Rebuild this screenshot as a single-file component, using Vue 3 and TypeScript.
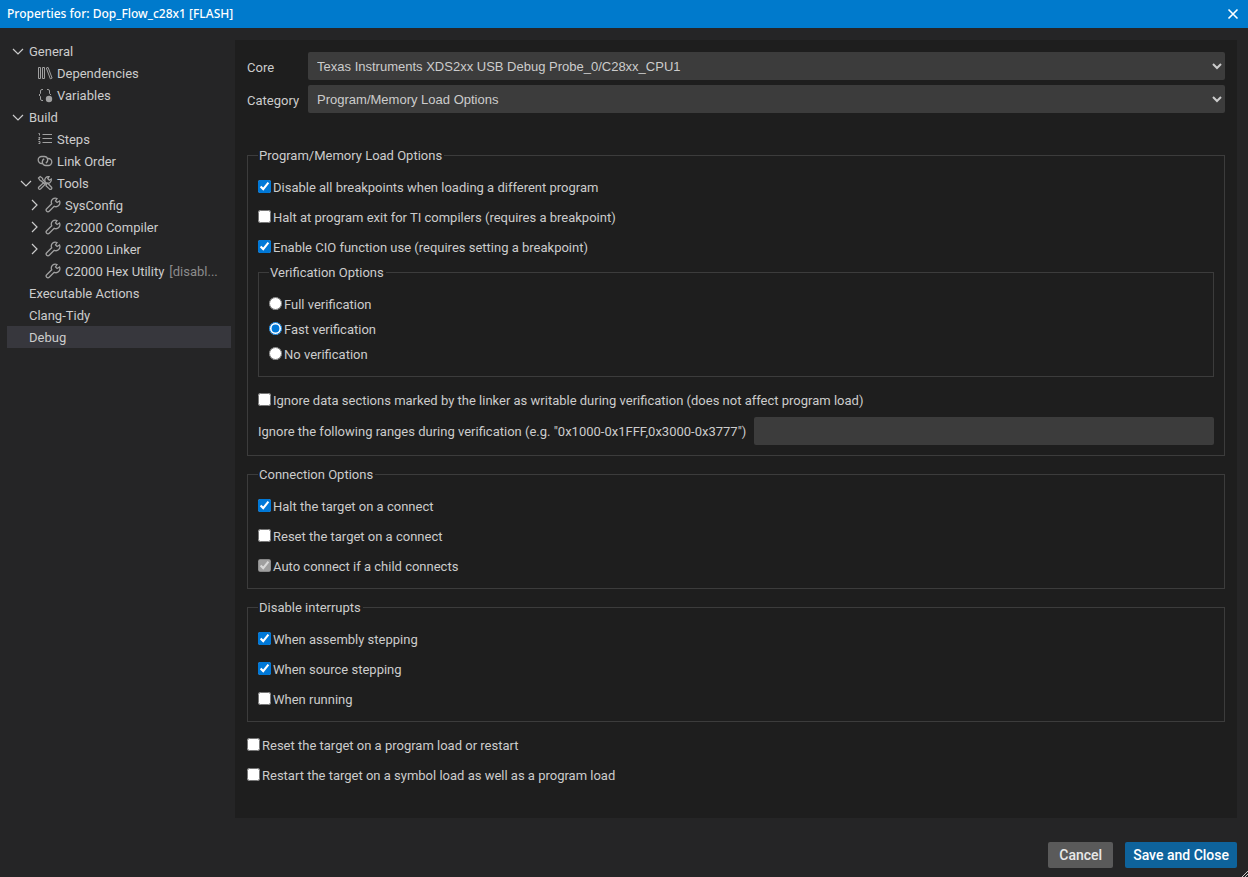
<script setup lang="ts">
import { reactive, ref } from 'vue'

type IconName = 'library' | 'variable' | 'list' | 'link' | 'tools' | 'wrench'

interface TreeNode {
  label: string
  level: 'root' | 'child' | 'group' | 'leaf'
  icon?: IconName
  arrow?: 'open' | 'closed'
  note?: string
}

interface Option {
  id: string
  label: string
  checked: boolean
  disabled?: boolean
}

const nodes: TreeNode[] = [
  { label: 'General', level: 'root', arrow: 'open' },
  { label: 'Dependencies', level: 'child', icon: 'library' },
  { label: 'Variables', level: 'child', icon: 'variable' },
  { label: 'Build', level: 'root', arrow: 'open' },
  { label: 'Steps', level: 'child', icon: 'list' },
  { label: 'Link Order', level: 'child', icon: 'link' },
  { label: 'Tools', level: 'group', icon: 'tools', arrow: 'open' },
  { label: 'SysConfig', level: 'leaf', icon: 'wrench', arrow: 'closed' },
  { label: 'C2000 Compiler', level: 'leaf', icon: 'wrench', arrow: 'closed' },
  { label: 'C2000 Linker', level: 'leaf', icon: 'wrench', arrow: 'closed' },
  { label: 'C2000 Hex Utility', level: 'leaf', icon: 'wrench', note: '[disabl...' },
  { label: 'Executable Actions', level: 'root' },
  { label: 'Clang-Tidy', level: 'root' },
  { label: 'Debug', level: 'root' },
]

const selected = ref('Debug')
const core = ref('Texas Instruments XDS2xx USB Debug Probe_0/C28xx_CPU1')
const category = ref('Program/Memory Load Options')
const ranges = ref('')
const verification = ref('Fast verification')
const verificationModes = ['Full verification', 'Fast verification', 'No verification']

const loadOptions = reactive<Option[]>([
  { id: 'bp', label: 'Disable all breakpoints when loading a different program', checked: true },
  { id: 'exit', label: 'Halt at program exit for TI compilers (requires a breakpoint)', checked: false },
  { id: 'cio', label: 'Enable CIO function use (requires setting a breakpoint)', checked: true },
])
const ignoreWritable = ref(false)
const connectOptions = reactive<Option[]>([
  { id: 'halt', label: 'Halt the target on a connect', checked: true },
  { id: 'reset', label: 'Reset the target on a connect', checked: false },
  { id: 'auto', label: 'Auto connect if a child connects', checked: true, disabled: true },
])
const interruptOptions = reactive<Option[]>([
  { id: 'asm', label: 'When assembly stepping', checked: true },
  { id: 'src', label: 'When source stepping', checked: true },
  { id: 'run', label: 'When running', checked: false },
])
const restartOptions = reactive<Option[]>([
  { id: 'reload', label: 'Reset the target on a program load or restart', checked: false },
  { id: 'symbol', label: 'Restart the target on a symbol load as well as a program load', checked: false },
])
</script>

<template>
  <div class="dialog">
    <header class="titlebar">
      <h1>Properties for: Dop_Flow_c28x1 [FLASH]</h1>
      <button class="close" type="button" aria-label="Close">
        <svg width="16" height="16" viewBox="0 0 16 16"><path d="M3.500 3.500l9 9M12.500 3.500l-9 9" /></svg>
      </button>
    </header>

    <div class="body">
      <nav class="tree" aria-label="Property pages">
        <button
          v-for="node in nodes"
          :key="node.label"
          type="button"
          class="node"
          :class="[node.level, { selected: node.label === selected }]"
          @click="selected = node.label"
        >
          <svg class="arrow" width="16" height="16" viewBox="0 0 16 16">
            <path v-if="node.arrow === 'open'" d="M3 6l5 5 5-5" />
            <path v-else-if="node.arrow === 'closed'" d="M6 3l5 5-5 5" />
          </svg>
          <svg v-if="node.icon" class="icon" width="16" height="16" viewBox="0 0 16 16">
            <path v-if="node.icon === 'library'" d="M1.500 2.500h2v11h-2zM5.500 2.500h2v11h-2zM9.300 3l1.800-.6 4 10.700-1.800.7z" />
            <template v-else-if="node.icon === 'variable'">
              <path d="M6 2.500H5Q3.500 2.500 3.500 4v2.500L2 8l1.500 1.500V12q0 1.500 1.500 1.500h1M10 2.500h1q1.500 0 1.500 1.500v2.500L14 8" />
              <circle class="solid" cx="12" cy="12" r="3.200" />
            </template>
            <path v-else-if="node.icon === 'list'" d="M5.500 3.500H15M5.500 7.500H15M5.500 11.500H15M1.500 2.500h1v2M1.500 6.500h1.500l-1.500 2h1.500M1.500 10.500h1.500v2h-1.500" />
            <path v-else-if="node.icon === 'link'" class="bold" d="M5.500 10.500H4.700a3.500 3.500 0 0 1 0-7h2.600a3.500 3.500 0 0 1 1.500 6.600M10.500 5.500h.8a3.500 3.500 0 0 1 0 7H8.700a3.500 3.500 0 0 1-1.500-6.600" />
            <template v-else-if="node.icon === 'tools'">
              <path class="bold" d="M1.500 3l1.700-1.500 2.300 1.800.3 1.500 3 3-1.300 1.300-3-3L3.200 5.500zM9.500 9l1.300-.7 3.700 3.900q.7 1-.1 1.800t-1.800.1L9 10.700z" />
              <path class="bold" d="M14.300 4l-2 1.200-1.500-1.500L12 1.700A3.500 3.500 0 0 0 8 6.400L1.700 12.200q-.7.900.1 1.700t1.700.1L9.500 7.900a3.500 3.500 0 0 0 4.800-3.900z" />
            </template>
            <path v-else class="bold" d="M14.500 4l-2.400 1.500-1.600-1.600L12 1.500A4 4 0 0 0 6.700 6.800L1.700 11.800a1.700 1.700 0 0 0 2.500 2.500L9.200 9.300a4 4 0 0 0 5.300-5.300z" />
          </svg>
          <span class="text">{{ node.label }}</span>
          <span v-if="node.note" class="text note">{{ node.note }}</span>
        </button>
      </nav>

      <main class="panel">
        <div class="selectors">
          <label for="core">Core</label>
          <select id="core" v-model="core">
            <option>Texas Instruments XDS2xx USB Debug Probe_0/C28xx_CPU1</option>
          </select>
          <label for="category">Category</label>
          <select id="category" v-model="category">
            <option>Program/Memory Load Options</option>
          </select>
        </div>

        <fieldset>
          <legend>Program/Memory Load Options</legend>
          <label v-for="o in loadOptions" :key="o.id" class="option">
            <input v-model="o.checked" type="checkbox" />
            <span class="text">{{ o.label }}</span>
          </label>
          <fieldset class="nested">
            <legend>Verification Options</legend>
            <label v-for="mode in verificationModes" :key="mode" class="option radio">
              <input v-model="verification" type="radio" name="verification" :value="mode" />
              <span class="text">{{ mode }}</span>
            </label>
          </fieldset>
          <label class="option">
            <input v-model="ignoreWritable" type="checkbox" />
            <span class="text">Ignore data sections marked by the linker as writable during verification (does not affect program load)</span>
          </label>
          <div class="ranges">
            <label class="text" for="ranges">Ignore the following ranges during verification (e.g. "0x1000-0x1FFF,0x3000-0x3777")</label>
            <input id="ranges" v-model="ranges" type="text" />
          </div>
        </fieldset>

        <fieldset>
          <legend>Connection Options</legend>
          <label v-for="o in connectOptions" :key="o.id" class="option">
            <input v-model="o.checked" type="checkbox" :disabled="o.disabled" />
            <span class="text">{{ o.label }}</span>
          </label>
        </fieldset>

        <fieldset>
          <legend>Disable interrupts</legend>
          <label v-for="o in interruptOptions" :key="o.id" class="option">
            <input v-model="o.checked" type="checkbox" />
            <span class="text">{{ o.label }}</span>
          </label>
        </fieldset>

        <div class="loose">
          <label v-for="o in restartOptions" :key="o.id" class="option">
            <input v-model="o.checked" type="checkbox" />
            <span class="text">{{ o.label }}</span>
          </label>
        </div>
      </main>
    </div>

    <footer class="actions">
      <button type="button" class="action">Cancel</button>
      <button type="button" class="action primary">Save and Close</button>
    </footer>
    <svg class="grip" width="6" height="6" viewBox="0 0 6 6"><path d="M0 6L6 0M3 6l3-3" /></svg>
  </div>
</template>

<style>
body {
  margin: 0;
  background: #252526;
}
</style>

<style scoped>
.dialog {
  position: relative;
  display: flex;
  flex-direction: column;
  box-sizing: border-box;
  min-height: 100vh;
  background: #252526;
  color: #cccccc;
  font: 13px/18px "Segoe UI", Roboto, sans-serif;
}

svg {
  fill: none;
  stroke: currentColor;
  flex: none;
}

button {
  font: inherit;
  color: inherit;
  border: 0;
}

.titlebar {
  display: flex;
  align-items: center;
  justify-content: space-between;
  height: 28px;
  padding: 0 7px;
  background: #007acc;
  color: #ffffff;
}

.titlebar h1 {
  margin: 0;
  font: 500 12px/18px "Segoe UI", "Noto Sans", sans-serif;
}

.close {
  display: flex;
  padding: 0;
  background: none;
}

.close path {
  stroke-width: 1.6;
}

.body {
  display: flex;
  flex: 1;
  gap: 4px;
  padding: 12px 11px 0 7px;
}

.tree {
  width: 224px;
  flex: none;
}

.node {
  display: flex;
  align-items: center;
  width: 100%;
  height: 22px;
  padding: 0 0 0 3px;
  background: none;
  text-align: left;
  white-space: nowrap;
}

.node.selected {
  background: #37373d;
}

.text {
  padding-top: 2px;
}

.arrow {
  margin-right: 3px;
  stroke-width: 1.2;
}

.icon {
  margin-right: 4px;
  color: #a0a0a0;
}

.bold {
  stroke-width: 1.3;
}

.child,
.group {
  padding-left: 11px;
}

.leaf {
  padding-left: 19px;
}

.solid {
  fill: currentColor;
  stroke: none;
}

.note {
  margin-left: 5px;
  color: #8c8c8c;
}

.panel {
  flex: 1;
  min-width: 0;
  padding: 12px;
  background: #1e1e1e;
}

.selectors {
  display: grid;
  grid-template-columns: auto 1fr;
  align-items: center;
  gap: 5px 9px;
  margin-bottom: 34px;
}

.selectors label {
  padding-top: 4px;
}

select {
  height: 28px;
  width: 100%;
  padding: 0 5px;
  border: 0;
  border-radius: 2px;
  background: #3c3c3c;
  color: #cccccc;
  font: 13px/18px Arial, "Liberation Sans", sans-serif;
}

fieldset {
  min-width: 0;
  margin: 0 0 10px;
  padding: 8px 10px 7px;
  border: 1px solid #3c3c3c;
}

legend {
  padding: 0 2px 0 1px;
  line-height: 17px;
}

.nested {
  margin: 2px 0 8px;
  padding: 10px;
}

.option {
  display: flex;
  align-items: center;
  gap: 2px;
  height: 30px;
}

.option.radio {
  height: 25px;
}

.option input {
  flex: none;
  width: 13px;
  height: 13px;
  margin: 0 0 1px;
  accent-color: #0078d7;
}

.ranges {
  display: flex;
  align-items: center;
  gap: 8px;
  margin: 2px 0 3px;
}

.ranges input {
  flex: 1;
  min-width: 0;
  height: 28px;
  box-sizing: border-box;
  padding: 0 8px;
  border: 0;
  border-radius: 2px;
  background: #3c3c3c;
  color: #cccccc;
  font: inherit;
}

.loose {
  margin-top: -2px;
}

.actions {
  display: flex;
  justify-content: flex-end;
  gap: 12px;
  padding: 24px 11px 9px;
}

.action {
  height: 26px;
  padding: 0 11px;
  border-radius: 2px;
  background: #5a5a5a;
  color: #e8e8e8;
  font: 500 14px/18px Roboto, sans-serif;
}

.primary {
  padding: 0 8px;
  background: #0e639c;
  color: #ffffff;
}

.grip {
  position: absolute;
  right: 0;
  bottom: 0;
}
</style>
